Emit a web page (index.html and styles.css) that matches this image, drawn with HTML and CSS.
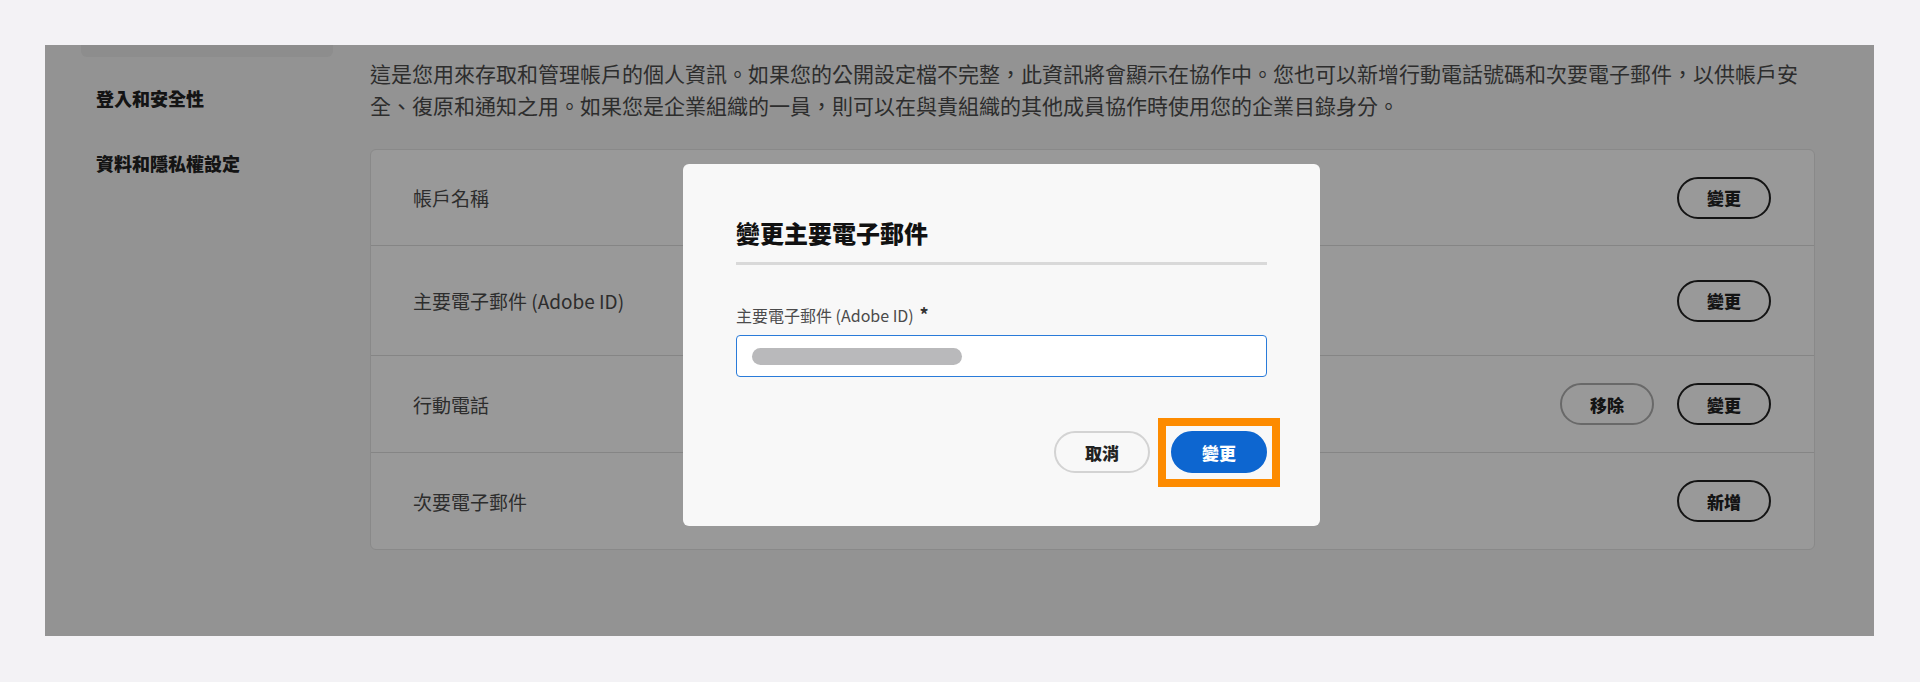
FILE: index.html
```html
<!DOCTYPE html>
<html lang="zh-Hant">
<head>
    <meta charset="UTF-8">
    <meta name="viewport" content="width=device-width, initial-scale=1.0">
    <title>帳戶資訊</title>
    <link rel="stylesheet" href="styles.css">
</head>
<body>
    <div class="panel">
        <nav class="sidebar">
            <div class="nav-item active"></div>
            <div class="nav-item">登入和安全性</div>
            <div class="nav-item">資料和隱私權設定</div>
        </nav>

        <main class="content">
            <p class="intro">這是您用來存取和管理帳戶的個人資訊。如果您的公開設定檔不完整，此資訊將會顯示在協作中。您也可以新增行動電話號碼和次要電子郵件，以供帳戶安全、復原和通知之用。如果您是企業組織的一員，則可以在與貴組織的其他成員協作時使用您的企業目錄身分。</p>

            <div class="card">
                <div class="row">
                    <span class="row-label">帳戶名稱</span>
                    <div class="row-actions">
                        <button class="btn">變更</button>
                    </div>
                </div>
                <div class="row row-tall">
                    <span class="row-label">主要電子郵件 (Adobe ID)</span>
                    <div class="row-actions">
                        <button class="btn">變更</button>
                    </div>
                </div>
                <div class="row">
                    <span class="row-label">行動電話</span>
                    <div class="row-actions">
                        <button class="btn btn-quiet">移除</button>
                        <button class="btn">變更</button>
                    </div>
                </div>
                <div class="row">
                    <span class="row-label">次要電子郵件</span>
                    <div class="row-actions">
                        <button class="btn">新增</button>
                    </div>
                </div>
            </div>
        </main>

        <div class="backdrop"></div>

        <div class="dialog">
            <h2 class="dialog-title">變更主要電子郵件</h2>
            <div class="dialog-divider"></div>
            <label class="field-label">主要電子郵件 (Adobe ID) <span class="required">*</span></label>
            <div class="field-input">
                <span class="redacted"></span>
            </div>
            <div class="dialog-actions">
                <button class="btn btn-secondary">取消</button>
                <span class="highlight">
                    <button class="btn btn-primary">變更</button>
                </span>
            </div>
        </div>
    </div>
</body>
</html>
```

FILE: styles.css
```css
body {
    margin: 0;
    padding: 45px 46px 46px 45px;
    background: #f3f2f5;
    font-family: "Noto Sans CJK TC", "Noto Sans", sans-serif;
}
.panel {
    position: relative;
    height: 591px;
    overflow: hidden;
    background: #f5f5f5;
    display: flex;
    gap: 37px;
    padding: 12px 59px 0 36px;
    box-sizing: border-box;
}
.sidebar {
    width: 252px;
    flex-shrink: 0;
}
.nav-item {
    height: 48px;
    line-height: 48px;
    padding: 0 15px;
    margin-bottom: 17px;
    font-size: 18px;
    font-weight: 900;
    color: #222;
    border-radius: 6px;
}
.nav-item.active {
    margin-top: -48px;
    background: #ebebeb;
}
.content {
    flex: 1;
}
.intro {
    margin: 0 0 28px;
    font-size: 21px;
    line-height: 32px;
    color: #4b4b4b;
}
.card {
    background: #fff;
    border: 1px solid #e4e4e4;
    border-radius: 6px;
}
.row {
    display: flex;
    align-items: center;
    justify-content: space-between;
    min-height: 96px;
    padding: 0 43px 0 42px;
    border-top: 1px solid #dedede;
}
.row:first-child {
    border-top: none;
    min-height: 95px;
}
.row-tall {
    min-height: 109px;
}
.row-label {
    font-size: 19px;
    color: #4b4b4b;
}
.row-actions {
    display: flex;
    gap: 23px;
}
.btn {
    height: 42px;
    padding: 0 28px;
    border: 2px solid #222;
    border-radius: 21px;
    background: transparent;
    font-family: inherit;
    font-size: 17px;
    font-weight: 900;
    color: #222;
    cursor: pointer;
}
.btn-quiet {
    border-color: #b0b0b0;
}
.backdrop {
    position: absolute;
    inset: 0;
    background: rgba(0, 0, 0, 0.4);
}
.dialog {
    position: absolute;
    left: 638px;
    top: 119px;
    width: 637px;
    box-sizing: border-box;
    padding: 53px;
    background: #f8f8f8;
    border-radius: 6px;
}
.dialog-title {
    margin: 0;
    font-size: 24px;
    line-height: 31px;
    font-weight: 900;
    color: #111;
}
.dialog-divider {
    height: 3px;
    margin-top: 14px;
    background: #d9d9d9;
}
.field-label {
    display: block;
    margin-top: 37px;
    font-size: 16px;
    line-height: 24px;
    color: #4b4b4b;
}
.required {
    font-size: 18px;
    font-weight: bold;
    color: #333;
    margin-left: 2px;
}
.field-input {
    display: flex;
    align-items: center;
    height: 42px;
    margin-top: 8px;
    padding: 0 15px;
    box-sizing: border-box;
    background: #fff;
    border: 1px solid #2a7bd9;
    border-radius: 4px;
}
.redacted {
    width: 210px;
    height: 17px;
    border-radius: 9px;
    background: #b9b9bb;
}
.dialog-actions {
    display: flex;
    justify-content: flex-end;
    align-items: center;
    gap: 21px;
    margin-top: 54px;
}
.btn-secondary {
    border-color: #d3d3d3;
    padding: 0 29px;
}
.btn-primary {
    display: block;
    padding: 0 29px;
    background: #0d66d0;
    border-color: #0d66d0;
    color: #fff;
}
.highlight {
    position: relative;
}
.highlight::after {
    content: "";
    position: absolute;
    inset: -13px -13px -14px -13px;
    border: 8px solid #fd8b00;
    pointer-events: none;
}
```
